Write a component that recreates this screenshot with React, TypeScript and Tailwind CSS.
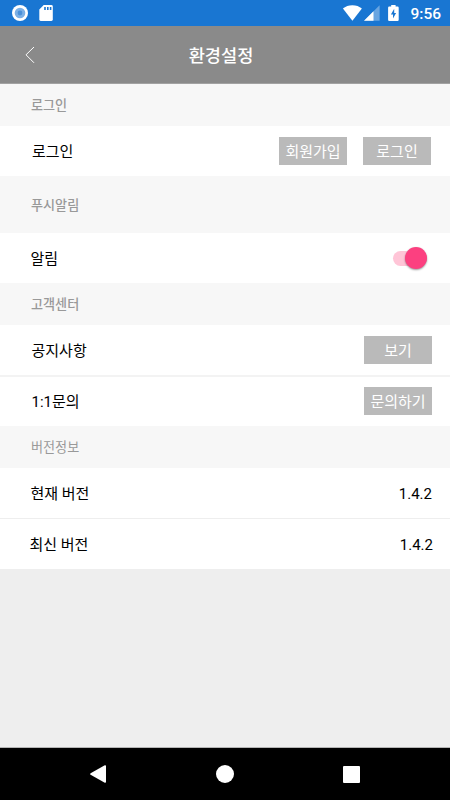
import type { ReactNode } from "react";

function StatusBar() {
  return (
    <div className="flex h-[26px] items-center bg-[#1976d2] text-white">
      <svg className="ml-3 h-4 w-4" viewBox="0 0 16 16">
        <circle cx="8" cy="8" r="8" fill="#fff" />
        <circle cx="8" cy="8" r="5.3" fill="#7bb0e6" />
        <circle cx="8" cy="8" r="2.4" fill="#4a90d9" />
      </svg>
      <svg className="ml-[11px] h-4 w-[14px]" viewBox="0 0 14 16">
        <path d="M4.7 0H12.4Q13.8 0 13.8 1.4V14.6Q13.8 16 12.4 16H1.7Q.3 16 .3 14.6V4.5Z" fill="#fff" />
        <path d="M5.2 2h1.6v3H5.2zM8 2h1.6v3H8zM10.8 2h1.6v3h-1.6z" fill="#1976d2" />
      </svg>
      <svg className="ml-auto h-4 w-5" viewBox="0 0 20 16">
        <path d="M10.4 15.8 .9 3.6Q4.8.2 10.4 .2T19.9 3.6Z" fill="#fff" />
      </svg>
      <svg className="ml-[2px] h-4 w-4" viewBox="0 0 16 16">
        <path d="M0 15.8 15.6.3V15.8Z" fill="#fff" fillOpacity=".35" />
        <path d="M0 15.8 9.5 6.3V15.8Z" fill="#fff" />
      </svg>
      <svg className="ml-2 h-4 w-[11px]" viewBox="0 0 11 16">
        <path d="M3.2 0h4.4v1.6h2q1.1 0 1.1 1.1v12q0 1.2-1.1 1.2H1.2Q.1 15.9.1 14.7v-12Q.1 1.6 1.2 1.6h2Z" fill="#fff" />
        <path d="M6.2 3.8 2.9 9.4H5V13.6L8.1 8H6.2Z" fill="#1976d2" />
      </svg>
      <span className="mr-[9px] ml-[11px] pt-[3px] font-['Roboto',sans-serif] text-[15.5px] leading-none font-medium">
        9:56
      </span>
    </div>
  );
}

function Header() {
  return (
    <header className="grid h-[58px] grid-cols-[50px_1fr_58px] items-center border-b border-[#a2a2a2] bg-[#8a8a8a]">
      <svg className="ml-[25px] h-[18px] w-[10px]" viewBox="0 0 10 18" fill="none" stroke="#fff" strokeWidth="1">
        <path d="M9 1 1 8.8l8 8" />
      </svg>
      <h1 className="text-center text-[17.6px] leading-none font-medium text-white">환경설정</h1>
    </header>
  );
}

function Section({ title, className = "h-[42px] font-medium" }: { title: string; className?: string }) {
  return (
    <h2 className={`flex items-center bg-[#f7f7f7] pl-[31px] text-[13.1px] leading-none text-[#999] ${className}`}>
      {title}
    </h2>
  );
}

function Row({ label, className, children }: { label: string; className: string; children: ReactNode }) {
  return (
    <div
      className={`flex items-center justify-between bg-white font-['Roboto','Noto_Sans_CJK_KR',sans-serif] text-[15px] leading-none text-black ${className}`}
    >
      <span className="pt-[2px]">{label}</span>
      {children}
    </div>
  );
}

function Button({ children }: { children: ReactNode }) {
  return (
    <button className="flex h-7 w-[68px] items-center justify-center bg-[#bababa] pt-[2px] text-[15px] leading-none text-white">
      {children}
    </button>
  );
}

function Switch() {
  return (
    <span className="relative h-[15px] w-[34px] rounded-full bg-[#ffc5d7]">
      <span className="absolute -top-[4px] right-0 h-[22px] w-[22px] rounded-full bg-[#fc4080] shadow-[0_1px_2px_rgba(0,0,0,0.4)]" />
    </span>
  );
}

function NavBar() {
  return (
    <nav className="flex h-[52px] items-center justify-between bg-black px-[90px]">
      <svg className="h-[18px] w-4" viewBox="0 0 16 18" fill="#fff">
        <path d="M.6 8.2 14.8.2Q16 0 16 1v16q0 1-1.2.8L.6 9.8Q-.3 9 .6 8.2Z" />
      </svg>
      <span className="h-[18px] w-[18px] rounded-full bg-white" />
      <span className="h-[17px] w-[17px] rounded-[1px] bg-white" />
    </nav>
  );
}

export default function App() {
  return (
    <div className="flex h-[800px] w-[450px] flex-col overflow-hidden bg-[#eee] font-['Noto_Sans_CJK_KR',sans-serif]">
      <StatusBar />
      <Header />
      <main className="flex-1 border-b border-[#b4b4b4]">
        <Section title="로그인" />
        <Row label="로그인" className="h-[50px] pr-[19px] pl-8">
          <div className="flex gap-4">
            <Button>회원가입</Button>
            <Button>로그인</Button>
          </div>
        </Row>
        <Section title="푸시알림" className="h-[57px] font-medium" />
        <Row label="알림" className="h-[50px] pr-[23px] pl-[30.5px]">
          <Switch />
        </Row>
        <Section title="고객센터" />
        <Row label="공지사항" className="h-[52px] border-b-2 border-[#f3f3f3] pr-[18px] pl-[31.5px]">
          <Button>보기</Button>
        </Row>
        <Row label="1:1문의" className="h-[49px] pr-[18px] pb-px pl-[31.5px]">
          <Button>문의하기</Button>
        </Row>
        <Section title="버전정보" className="h-[42px]" />
        <Row label="현재 버전" className="h-[51px] border-b border-[#eee] pr-[18px] pl-[30.5px]">
          <span className="pt-[2px]">1.4.2</span>
        </Row>
        <Row label="최신 버전" className="h-[50px] pr-[17px] pl-[29.5px]">
          <span className="pt-[2px]">1.4.2</span>
        </Row>
      </main>
      <NavBar />
    </div>
  );
}
